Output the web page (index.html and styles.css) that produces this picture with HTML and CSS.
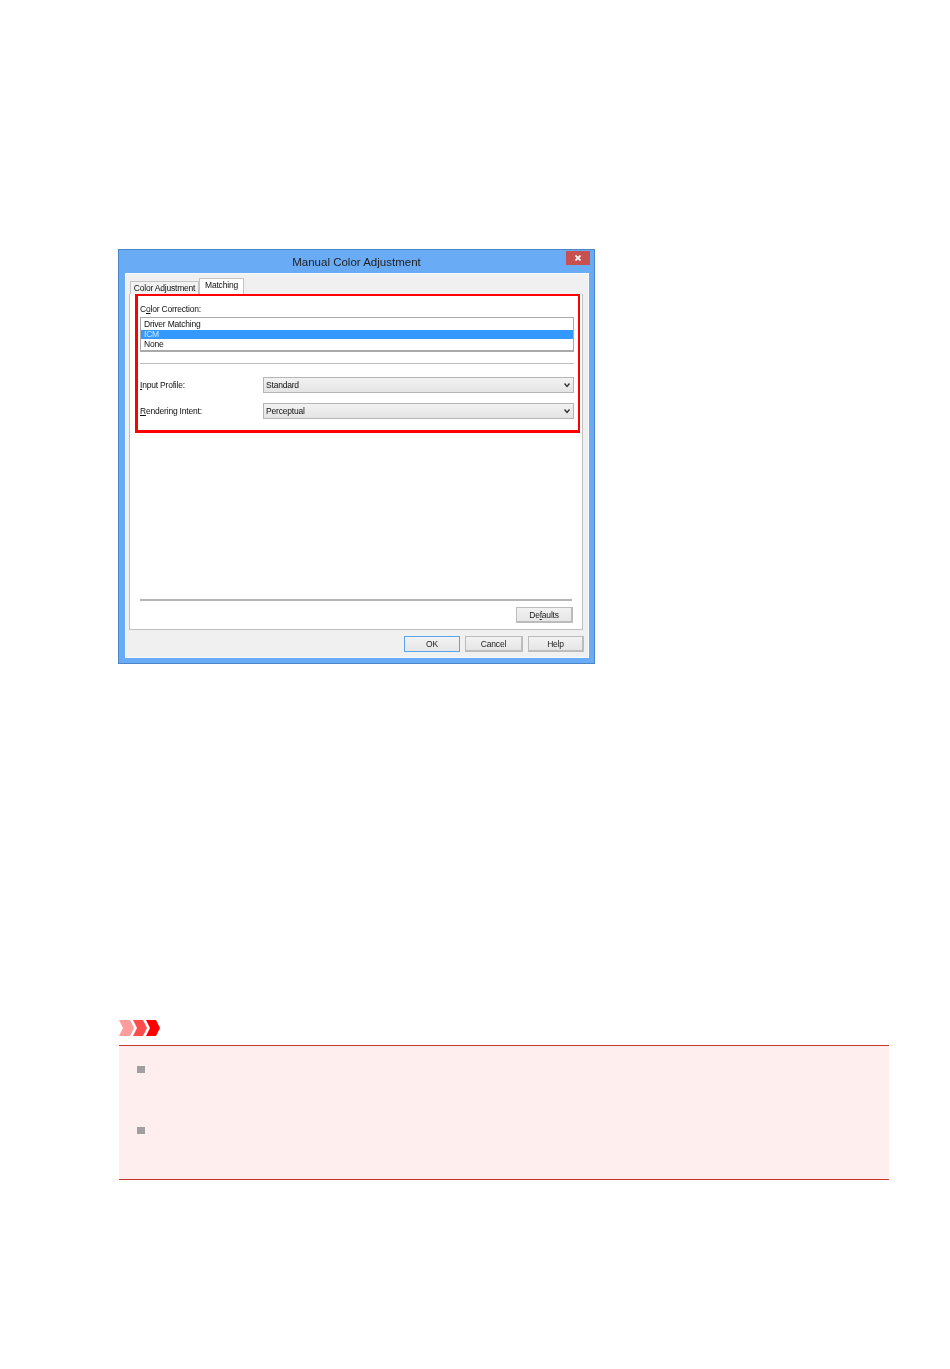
FILE: index.html
```html
<!DOCTYPE html>
<html lang="en">
<head>
  <meta charset="UTF-8">
  <title>Manual Color Adjustment</title>
  <link rel="stylesheet" href="styles.css">
</head>
<body>
  <div class="dialog">
    <div class="titlebar">
      <span class="title">Manual Color Adjustment</span>
      <span class="close">
        <svg width="6" height="6" viewBox="0 0 6 6"><path d="M0.5 0.5 L5.5 5.5 M5.5 0.5 L0.5 5.5" stroke="#fff" stroke-width="1.6"/></svg>
      </span>
    </div>
    <div class="client">
      <div class="tabs">
        <span class="tab">Color Adjustment</span>
        <span class="tab tab-active">Matching</span>
      </div>
      <div class="panel">
        <div class="highlight">
          <div class="field-label">C<u>o</u>lor Correction:</div>
          <div class="listbox">
            <div class="list-row">Driver Matching</div>
            <div class="list-row list-row-selected">ICM</div>
            <div class="list-row">None</div>
          </div>
          <div class="separator"></div>
          <div class="combo-row">
            <span class="combo-label"><u>I</u>nput Profile:</span>
            <span class="combo">Standard<svg class="arrow" width="6" height="5" viewBox="0 0 6 5"><path d="M0.5 0.5 L3 3.5 L5.5 0.5" fill="none" stroke="#333" stroke-width="1.4"/></svg></span>
          </div>
          <div class="combo-row">
            <span class="combo-label"><u>R</u>endering Intent:</span>
            <span class="combo">Perceptual<svg class="arrow" width="6" height="5" viewBox="0 0 6 5"><path d="M0.5 0.5 L3 3.5 L5.5 0.5" fill="none" stroke="#333" stroke-width="1.4"/></svg></span>
          </div>
        </div>
        <div class="panel-foot">
          <div class="rule"></div>
          <button class="btn btn-defaults">De<u>f</u>aults</button>
        </div>
      </div>
      <div class="actions">
        <button class="btn btn-ok">OK</button>
        <button class="btn btn-cancel">Cancel</button>
        <button class="btn btn-help">Help</button>
      </div>
    </div>
  </div>

  <svg class="chevrons" width="42" height="16" viewBox="0 0 42 16">
    <polygon points="0,0 11,0 15,8 11,16 0,16 4,8" fill="#ff9c9c"/>
    <polygon points="14,0 24,0 28,8 24,16 14,16 18,8" fill="#ff4c4c"/>
    <polygon points="27,0 37,0 41,8 37,16 27,16 31,8" fill="#ff0000"/>
  </svg>
  <div class="notice">
    <div class="notice-item"><span class="bullet"></span></div>
    <div class="notice-item"><span class="bullet"></span></div>
  </div>
</body>
</html>
```

FILE: styles.css
```css
body {
  margin: 0;
  padding: 249px 61px 0 119px;
  background: #fff;
  font-family: 'Liberation Sans', Arial, sans-serif;
  color: #111;
}
u {
  text-underline-offset: 1px;
}
.dialog {
  width: 475px;
  height: 413px;
  margin-left: -1px;
  border: 1px solid #4b86c8;
  background: #6aabf5;
  display: flex;
  flex-direction: column;
  filter: blur(0.45px);
}
.titlebar {
  height: 23px;
  position: relative;
  display: flex;
  justify-content: center;
  align-items: center;
}
.title {
  font-size: 11.5px;
  color: #222;
}
.close {
  position: absolute;
  top: 1px;
  right: 4px;
  width: 24px;
  height: 14px;
  background: #c75050;
  display: flex;
  align-items: center;
  justify-content: center;
}
.client {
  margin: 0 5px 0 6px;
  height: 385px;
  background: #f0f0f0;
  border: 1px solid #fafafa;
  box-sizing: border-box;
  padding: 4px 5px 0 3px;
  display: flex;
  flex-direction: column;
  font-size: 8.5px;
  letter-spacing: -0.2px;
}
.tabs {
  height: 16px;
  display: flex;
  align-items: flex-end;
  padding-left: 1px;
}
.tab {
  height: 13px;
  width: 69px;
  box-sizing: border-box;
  border: 1px solid #c4c4c4;
  border-bottom: none;
  background: #f2f2f2;
  line-height: 13px;
  text-align: center;
  white-space: nowrap;
}
.tab-active {
  height: 16px;
  width: 45px;
  background: #fff;
  line-height: 12px;
}
.panel {
  height: 336px;
  box-sizing: border-box;
  background: #fff;
  border: 1px solid #bfbfbf;
  border-top: none;
  padding: 0 2px 0 5px;
  display: flex;
  flex-direction: column;
}
.highlight {
  height: 139px;
  box-sizing: border-box;
  border: 3px solid #f00;
  border-right-width: 2px;
  border-top-width: 2px;
  padding: 7px 4px 0 2px;
}
.field-label {
  line-height: 12px;
  height: 14px;
}
.listbox {
  height: 35px;
  box-sizing: border-box;
  border: 1px solid #a9a9a9;
  border-bottom-width: 2px;
  padding-top: 2px;
}
.list-row {
  height: 10px;
  line-height: 8px;
  padding-left: 3px;
}
.list-row-selected {
  height: 9px;
  margin-bottom: 1px;
  background: #3399ff;
  color: #cfe6ff;
}
.separator {
  height: 1px;
  background: #bdbdbd;
  margin: 11px 0 13px;
}
.combo-row {
  display: flex;
  align-items: center;
  height: 16px;
  margin-bottom: 10px;
}
.combo-label {
  width: 123px;
}
.combo {
  flex: 1;
  height: 16px;
  box-sizing: border-box;
  border: 1px solid #b5b5b5;
  background: linear-gradient(#f2f2f2, #e4e4e4);
  line-height: 14px;
  padding: 0 3px 0 2px;
  display: flex;
  justify-content: space-between;
  align-items: center;
}
.panel-foot {
  margin-top: auto;
  padding: 0 7px 6px 5px;
  display: flex;
  flex-direction: column;
  align-items: flex-end;
  gap: 6px;
}
.rule {
  width: calc(100% - 1px);
  align-self: flex-start;
  height: 2px;
  background: #b4b4b4;
}
.btn {
  font-family: inherit;
  font-size: inherit;
  letter-spacing: inherit;
  color: #222;
  height: 16px;
  padding: 0;
  background: linear-gradient(#f2f2f2, #e6e6e6);
  border: 2px solid #bcbcbc;
  border-width: 1px 2px 2px 1px;
}
.btn-defaults {
  width: 57px;
}
.actions {
  display: flex;
  justify-content: flex-end;
  gap: 5px;
  padding-top: 6px;
  margin-right: -1px;
}
.btn-ok {
  width: 56px;
  border: 1px solid #5aa5e8;
}
.btn-cancel {
  width: 58px;
}
.btn-help {
  width: 56px;
}
.chevrons {
  display: block;
  margin-top: 356px;
}
.notice {
  margin-top: 9px;
  height: 135px;
  box-sizing: border-box;
  border-top: 1px solid #c8352c;
  border-bottom: 1px solid #c8352c;
  background: #feeeee;
  padding-top: 20px;
}
.notice-item {
  height: 61px;
  padding-left: 18px;
}
.bullet {
  display: block;
  width: 8px;
  height: 7px;
  background: #a0a0a0;
}
```
